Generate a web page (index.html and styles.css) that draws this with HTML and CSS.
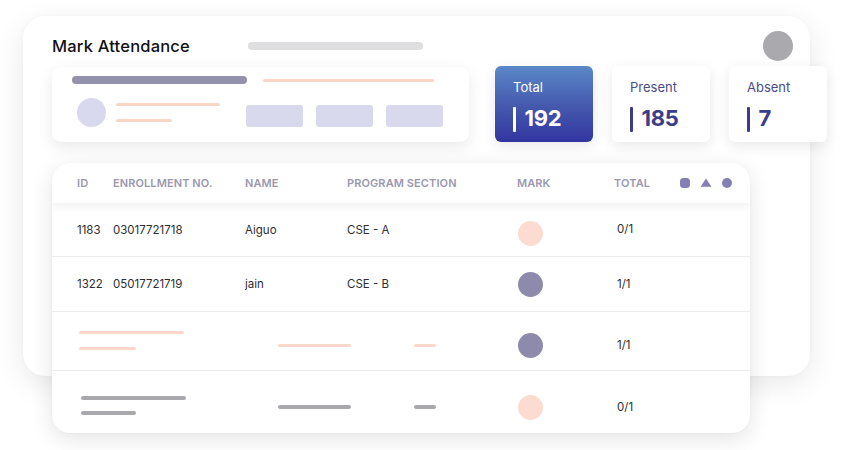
FILE: index.html
```html
<!DOCTYPE html>
<html lang="en">
<head>
<meta charset="utf-8">
<title>Mark Attendance</title>
<link rel="stylesheet" href="styles.css">
</head>
<body>
<div class="scene">
  <div class="board">
    <div class="board-head">
      <h1 class="title">Mark Attendance</h1>
      <span class="head-bar"></span>
      <span class="head-avatar"></span>
    </div>
    <div class="top-row">
      <div class="filter-card">
        <div class="filter-line">
          <span class="sk sk-purple"></span>
          <span class="sk sk-peach-thin"></span>
        </div>
        <div class="filter-body">
          <span class="f-avatar"></span>
          <div class="f-lines">
            <span class="sk sk-peach-a"></span>
            <span class="sk sk-peach-b"></span>
          </div>
          <div class="f-blocks">
            <span class="f-block"></span>
            <span class="f-block"></span>
            <span class="f-block"></span>
          </div>
        </div>
      </div>
      <div class="stats">
        <div class="stat stat-total">
          <div class="stat-label">Total</div>
          <div class="stat-value"><span class="pipe"></span>192</div>
        </div>
        <div class="stat">
          <div class="stat-label">Present</div>
          <div class="stat-value"><span class="pipe"></span>185</div>
        </div>
        <div class="stat">
          <div class="stat-label">Absent</div>
          <div class="stat-value"><span class="pipe"></span>7</div>
        </div>
      </div>
    </div>
    <div class="table-card">
      <div class="t-row t-head">
        <span>ID</span>
        <span>ENROLLMENT NO.</span>
        <span>NAME</span>
        <span>PROGRAM SECTION</span>
        <span>MARK</span>
        <span>TOTAL</span>
        <span class="h-icons">
          <span class="ic ic-sq"></span>
          <svg class="ic-tri" width="12" height="9" viewBox="0 0 12 9"><path d="M6 0.5 L11.5 8.8 L0.5 8.8 Z" fill="#8480b3"/></svg>
          <span class="ic ic-dot"></span>
        </span>
      </div>
      <div class="t-row t-data r1">
        <span>1183</span>
        <span>03017721718</span>
        <span>Aiguo</span>
        <span>CSE - A</span>
        <span class="mark"><span class="m-dot peach"></span></span>
        <span class="tot up">0/1</span>
        <span></span>
      </div>
      <div class="t-row t-data r2">
        <span>1322</span>
        <span>05017721719</span>
        <span>jain</span>
        <span>CSE - B</span>
        <span class="mark"><span class="m-dot purple"></span></span>
        <span class="tot">1/1</span>
        <span></span>
      </div>
      <div class="t-row t-data r3">
        <span class="ph-two">
          <span class="sk ph-long peach-sk"></span>
          <span class="sk ph-short peach-sk"></span>
        </span>
        <span class="ph-cell"><span class="sk ph-mid peach-sk"></span></span>
        <span class="ph-cell"><span class="sk ph-tiny peach-sk"></span></span>
        <span class="mark"><span class="m-dot purple"></span></span>
        <span class="tot">1/1</span>
        <span></span>
      </div>
      <div class="t-row t-data r4">
        <span class="ph-two">
          <span class="sk ph-long gray-sk"></span>
          <span class="sk ph-short gray-sk"></span>
        </span>
        <span class="ph-cell"><span class="sk ph-mid gray-sk"></span></span>
        <span class="ph-cell"><span class="sk ph-tiny gray-sk"></span></span>
        <span class="mark"><span class="m-dot peach"></span></span>
        <span class="tot">0/1</span>
        <span></span>
      </div>
    </div>
  </div>
</div>
</body>
</html>
```

FILE: styles.css
```css
* { box-sizing: border-box; }

html, body {
  margin: 0;
  padding: 0;
  background: #ffffff;
  font-family: "Inter", "Open Sans", "Liberation Sans", sans-serif;
  color: #2e2e33;
}

.scene {
  width: 850px;
  height: 450px;
  padding: 16px 0 0 23px;
  overflow: hidden;
}

.board {
  width: 787px;
  height: 360px;
  background: #fff;
  border-radius: 22px;
  box-shadow: 0 8px 30px rgba(0, 0, 0, 0.09), 0 0 4px rgba(0, 0, 0, 0.03);
  padding: 16px 0 0 29px;
}

.board-head {
  display: flex;
  align-items: center;
  height: 28px;
}

.title {
  margin: 0;
  font-size: 16.5px;
  font-weight: 500;
  color: #111114;
  letter-spacing: 0.2px;
  width: 149px;
  flex-shrink: 0;
  white-space: nowrap;
}

.head-bar {
  flex-shrink: 0;
  width: 175px;
  height: 8px;
  border-radius: 4px;
  background: #dfdfe1;
  margin-left: 47px;
  filter: blur(0.4px);
}

.head-avatar {
  flex-shrink: 0;
  width: 30px;
  height: 30px;
  border-radius: 50%;
  background: #a9a9ae;
  margin-left: auto;
  margin-right: 17px;
  filter: blur(0.3px);
}

.top-row {
  display: flex;
  margin-top: 6px;
  height: 76px;
}

.filter-card {
  flex-shrink: 0;
  width: 417px;
  height: 75px;
  margin-top: 1px;
  background: #fff;
  border-radius: 9px;
  box-shadow: 0 5px 16px rgba(0, 0, 0, 0.09);
  padding: 9px 0 0 20px;
}

.filter-line {
  display: flex;
  align-items: center;
  height: 8px;
}

.sk {
  display: block;
  flex-shrink: 0;
  filter: blur(0.5px);
}

.sk-purple {
  width: 175px;
  height: 8px;
  border-radius: 4px;
  background: #9491ad;
}

.sk-peach-thin {
  width: 171px;
  height: 3px;
  border-radius: 2px;
  background: #fbd6c8;
  margin-left: 16px;
}

.filter-body {
  display: flex;
  align-items: flex-start;
  margin-top: 14px;
  padding-left: 5px;
}

.f-avatar {
  flex-shrink: 0;
  width: 29px;
  height: 29px;
  border-radius: 50%;
  background: #d8d9ee;
  filter: blur(0.4px);
}

.f-lines {
  flex-shrink: 0;
  width: 140px;
  padding: 5px 0 0 10px;
  display: flex;
  flex-direction: column;
  gap: 13px;
}

.sk-peach-a {
  width: 104px;
  height: 3px;
  border-radius: 2px;
  background: #fbd6c8;
}

.sk-peach-b {
  width: 56px;
  height: 3px;
  border-radius: 2px;
  background: #fbd6c8;
}

.f-blocks {
  display: flex;
  gap: 13px;
  margin-top: 7px;
}

.f-block {
  flex-shrink: 0;
  width: 57px;
  height: 22px;
  border-radius: 3px;
  background: #d9d9ee;
  filter: blur(0.4px);
}

.stats {
  display: flex;
  flex-shrink: 0;
  gap: 19px;
  margin-left: 26px;
}

.stat {
  flex-shrink: 0;
  width: 98px;
  height: 76px;
  border-radius: 6px;
  background: #fff;
  box-shadow: 0 4px 14px rgba(0, 0, 0, 0.09);
  padding: 13px 0 0 18px;
}

.stat-total {
  background: linear-gradient(180deg, #5b88c8 0%, #4457ad 55%, #3235a0 100%);
}

.stat-label {
  font-size: 13px;
  font-weight: 400;
  color: #4b4c86;
  line-height: 16px;
}

.stat-value {
  display: flex;
  align-items: center;
  margin-top: 9px;
  font-size: 22px;
  font-weight: 700;
  color: #3b3d89;
  line-height: 26px;
  letter-spacing: -0.3px;
}

.pipe {
  display: inline-block;
  width: 2.5px;
  height: 25px;
  border-radius: 1px;
  background: #3b3d89;
  margin-right: 9px;
  margin-top: 3px;
}

.stat-total .stat-label,
.stat-total .stat-value {
  color: #ffffff;
}

.stat-total .pipe {
  background: #ffffff;
}

.table-card {
  width: 698px;
  height: 270px;
  margin-top: 21px;
  background: #fff;
  border-radius: 18px;
  box-shadow: 0 6px 22px rgba(0, 0, 0, 0.11), 0 0 3px rgba(0, 0, 0, 0.04);
  overflow: hidden;
}

.t-row {
  display: grid;
  grid-template-columns: 36px 132px 102px 170px 97px 66px 1fr;
  align-items: center;
  padding-left: 25px;
}

.t-head {
  height: 40px;
  font-size: 11px;
  font-weight: 600;
  color: #9a98ae;
  letter-spacing: 0.1px;
  box-shadow: 0 4px 8px rgba(0, 0, 0, 0.06);
  position: relative;
}

.h-icons {
  display: flex;
  align-items: center;
  gap: 10px;
}

.ic {
  display: block;
  width: 10px;
  height: 10px;
  background: #8480b3;
}

.ic-sq { border-radius: 3.5px; }
.ic-dot { border-radius: 50%; }
.ic-tri { display: block; margin-top: -1px; }

.t-data {
  font-size: 11.5px;
  font-weight: 400;
  color: #2e2e33;
  border-bottom: 1px solid #ececef;
}

.r1 { height: 54px; padding-top: 0; }
.r2 { height: 55px; }
.r3 { height: 59px; padding-top: 8px; }
.r4 { height: 62px; padding-top: 10px; border-bottom: none; }

.mark { display: flex; }

.m-dot {
  display: block;
  width: 25px;
  height: 25px;
  border-radius: 50%;
  margin-left: 1px;
}

.r1 .m-dot { margin-top: 8px; }

.m-dot.peach { background: #fcdcd0; }
.m-dot.purple { background: #8e8aab; }

.tot { padding-left: 3px; }
.tot.up { margin-top: -2px; }

.ph-two {
  grid-column: 1 / span 2;
  display: flex;
  flex-direction: column;
  padding-left: 2px;
}

.ph-cell { display: flex; }

.ph-long { width: 105px; height: 3px; border-radius: 2px; }
.ph-short { width: 57px; height: 3px; border-radius: 2px; margin-top: 13px; }
.ph-mid { width: 73px; height: 3px; border-radius: 2px; margin-left: 33px; }
.ph-tiny { width: 22px; height: 3px; border-radius: 2px; margin-left: 67px; }

.r3 .ph-two { margin-top: -9px; }

.peach-sk { background: #fcd7ca; }

.gray-sk { background: #a8a8ad; height: 4px; }
.r4 .ph-two { padding-left: 4px; margin-top: -4px; }
.r4 .ph-short { margin-top: 11px; width: 55px; }
```
